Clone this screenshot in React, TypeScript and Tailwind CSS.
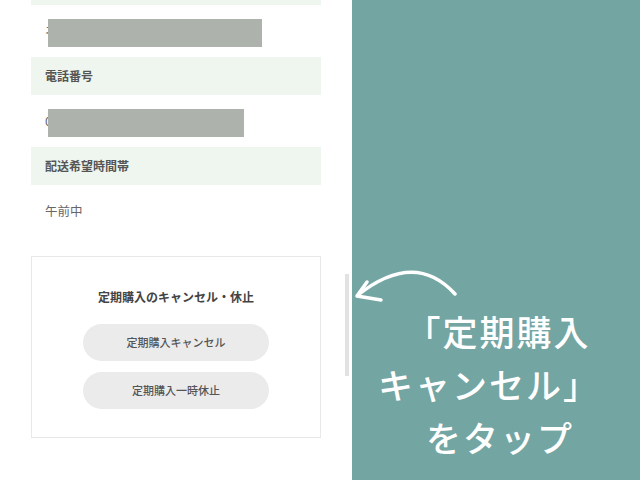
import React from 'react';

// 定期購入の詳細画面（左）＋ 操作ガイド（右）

const jp = { fontFamily: '"Noto Sans CJK JP", "Noto Sans", sans-serif' };

function Header({ label }: { label: string }) {
  return (
    <div className="h-[38px] bg-[#eef6ef] px-[14px] flex items-center text-[12px] font-bold text-[#555]">
      {label}
    </div>
  );
}

function Value({ children, mask }: { children: React.ReactNode; mask?: number }) {
  return (
    <div className="relative h-[52px] px-[14px] flex items-center text-[12.5px] text-[#666]">
      {children}
      {mask && (
        <div
          className="absolute left-[17px] top-[14px] h-[28px] bg-[#adb2ad]"
          style={{ width: mask }}
        />
      )}
    </div>
  );
}

export default function App() {
  return (
    <div className="relative flex w-[640px] h-[480px] overflow-hidden bg-white" style={jp}>
      {/* 左：注文詳細 */}
      <div className="w-[352px] px-[31px] flex flex-col">
        <div className="h-[5px] bg-[#eef6ef]" />
        <Value mask={214}>
          <span>ネ</span>
          <span className="ml-[193px]">0)</span>
        </Value>
        <Header label="電話番号" />
        <Value mask={196}>0</Value>
        <Header label="配送希望時間帯" />
        <Value>午前中</Value>

        <div className="mt-[19px] border border-[#e8e8e8] flex flex-col items-center pt-[31px] pb-[28px]">
          <p className="text-[12px] font-bold text-[#444] leading-[18px]">
            定期購入のキャンセル・休止
          </p>
          <button className="mt-[18px] w-[186px] h-[37px] rounded-full bg-[#ebebeb] text-[11px] font-medium text-[#555]">
            定期購入キャンセル
          </button>
          <button className="mt-[11px] w-[186px] h-[37px] rounded-full bg-[#ebebeb] text-[11px] font-medium text-[#555]">
            定期購入一時休止
          </button>
        </div>
      </div>

      {/* スクロールバー */}
      <div className="absolute left-[345px] top-[274px] w-[4px] h-[102px] bg-[#e2e2e2]" />

      {/* 右：ガイド */}
      <div className="flex-1 bg-[#73a5a3] flex flex-col items-center pt-[304px] text-white text-[35px] font-medium leading-[53px] tracking-[2px] pl-[8px]">
        <p className="-ml-[4px]">「定期購入</p>
        <p className="-ml-[22px]">キャンセル」</p>
        <p>をタップ</p>
      </div>

      {/* 矢印 */}
      <svg
        className="absolute left-[340px] top-[260px]"
        width="130"
        height="50"
        viewBox="0 0 130 50"
        fill="none"
        stroke="white"
        strokeWidth="3.5"
        strokeLinecap="round"
        strokeLinejoin="round"
      >
        <path d="M115 34 Q75 -10 18 35" />
        <path d="M27 22 L17 36 L41 40" />
      </svg>
    </div>
  );
}
